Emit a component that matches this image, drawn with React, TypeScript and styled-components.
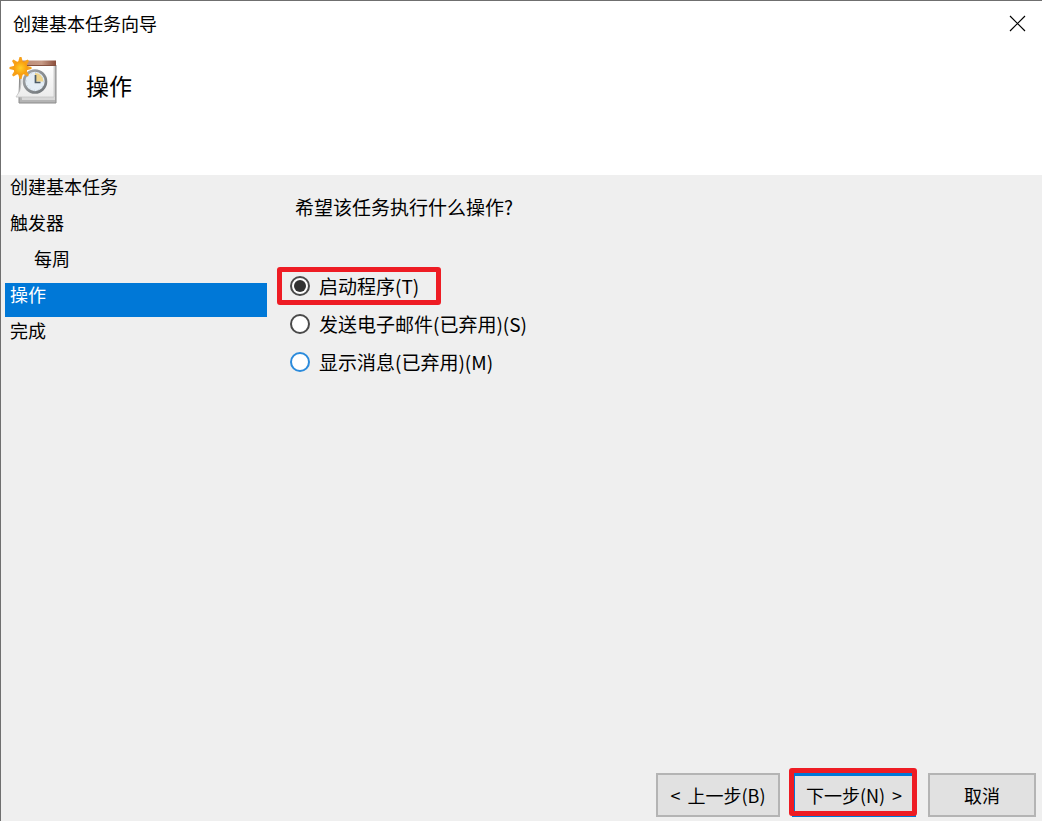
import React, { useState } from "react";
import styled, { createGlobalStyle, css } from "styled-components";

const GlobalStyle = createGlobalStyle`
  *, *::before, *::after { box-sizing: border-box; }
  body {
    margin: 0;
    background: #efefef;
    color: #000;
    font-family: "Noto Sans CJK SC", "Noto Sans", sans-serif;
    font-size: 18px;
  }
  button, input { font: inherit; color: inherit; }
`;

const callout = css`
  position: absolute;
  border: 5px solid #ee1c24;
  border-radius: 3px;
  pointer-events: none;
  content: "";
`;

const Dialog = styled.main`
  display: flex;
  flex-direction: column;
  min-height: 100vh;
  background: #efefef;
  border: solid #6f6f6f;
  border-width: 1px 0 0 1px;
`;

const Top = styled.header`
  height: 174px;
  background: #fff;
`;

const TitleBar = styled.div`
  display: flex;
  align-items: center;
  justify-content: space-between;
  height: 44px;
  padding: 0 16px 0 12px;
`;

const CloseButton = styled.button`
  display: flex;
  padding: 0;
  border: 0;
  background: none;
`;

const Banner = styled.div`
  display: flex;
  align-items: center;
  gap: 29px;
  padding: 12px 8px;
`;

const Heading = styled.h1`
  margin: 8px 0 0;
  font-size: 23px;
  line-height: 36px;
  font-weight: 400;
`;

const Body = styled.div`
  display: flex;
  flex: 1;
`;

const Steps = styled.ol`
  display: flex;
  flex-direction: column;
  gap: 2px;
  width: 262px;
  margin: 0 0 0 4px;
  padding: 0;
  list-style: none;
`;

const Step = styled.li<{ $current?: boolean; $nested?: boolean }>`
  height: 34px;
  padding-left: ${(p) => (p.$nested ? 29 : 5)}px;
  line-height: 23px;
  color: ${(p) => (p.$current ? "#fff" : "#000")};
  background: ${(p) => (p.$current ? "#0078d7" : "transparent")};
`;

const Options = styled.fieldset`
  flex: 1;
  min-width: 0;
  margin: 0;
  padding: 18px 0 0 23px;
  border: 0;
  font-size: 19px;
`;

const Question = styled.legend`
  float: left;
  width: 100%;
  margin-bottom: 51px;
  padding: 0 0 0 5px;
  line-height: 28px;
`;

const OptionList = styled.div`
  display: flex;
  flex-direction: column;
  align-items: flex-start;
  clear: both;
  gap: 10px;
`;

const Option = styled.label<{ $marked?: boolean }>`
  position: relative;
  display: flex;
  align-items: center;
  gap: 9px;
  line-height: 28px;
  height: 28px;

  &::after {
    ${(p) => p.$marked && callout}
    inset: -5px -22px -5px -13px;
  }
`;

const Radio = styled.input<{ $hot?: boolean }>`
  appearance: none;
  display: grid;
  place-items: center;
  width: 20px;
  height: 20px;
  margin: 0;
  border: 2px solid ${(p) => (p.$hot ? "#2b8bdc" : "#4a4a4a")};
  border-radius: 50%;
  background: #fff;

  &:checked::before {
    width: 12px;
    height: 12px;
    border-radius: 50%;
    background: #333;
    content: "";
  }
`;

const Actions = styled.footer`
  display: flex;
  justify-content: flex-end;
  gap: 12px;
  padding: 0 6px 4px;
`;

const Button = styled.button<{ $primary?: boolean; $narrow?: boolean }>`
  position: relative;
  display: flex;
  align-items: center;
  justify-content: center;
  gap: 7px;
  width: ${(p) => (p.$narrow ? 108 : 124)}px;
  height: 44px;
  padding: 0;
  border: ${(p) => (p.$primary ? "3px solid #0078d7" : "2px solid #b4b4b4")};
  background: #e1e1e1;
  line-height: 24px;
  white-space: nowrap;

  &::after {
    ${(p) => p.$primary && callout}
    inset: -8px -4px -2px -6px;
  }
`;

const rays = Array.from({ length: 8 }, (_, i) => i * 45);

function TaskIcon() {
  return (
    <svg width="48" height="48" viewBox="0 0 48 48" aria-hidden="true">
      <defs>
        <linearGradient id="paper" x1="0" y1="0" x2="0" y2="1">
          <stop offset="0" stopColor="#fff" />
          <stop offset="1" stopColor="#ececec" />
        </linearGradient>
        <linearGradient id="binding" x1="0" y1="0" x2="1" y2="0">
          <stop offset="0" stopColor="#b98974" />
          <stop offset=".6" stopColor="#c69a86" />
          <stop offset="1" stopColor="#8a4d3a" />
        </linearGradient>
        <linearGradient id="rim" x1="0" y1="0" x2="1" y2="1">
          <stop offset="0" stopColor="#a5a8ab" />
          <stop offset="1" stopColor="#6f7478" />
        </linearGradient>
        <radialGradient id="sun">
          <stop offset="0" stopColor="#ffd02a" />
          <stop offset="1" stopColor="#f99b0c" />
        </radialGradient>
      </defs>
      <path d="M11 8H47V46H10V40Z" fill="#b4b4b4" stroke="#8c8c8c" />
      <path d="M11 8H46V43H13Z" fill="#d8d8d8" />
      <path d="M12 8H45V40H7Q12 34 12 27Z" fill="url(#paper)" stroke="#c4c4c4" strokeWidth=".8" />
      <path d="M11 3.500H47V9H11Z" fill="url(#binding)" />
      <path d="M11 8.500H47" stroke="#85513f" />
      <circle cx="26" cy="24.500" r="11" fill="#e4edf5" stroke="url(#rim)" strokeWidth="2.600" />
      <path d="M26 24.500V16A8.500 8.500 0 0 1 34.500 24.500Z" fill="#efd58c" />
      <circle cx="26" cy="24.500" r="8.800" fill="none" stroke="#b5c2cc" strokeDasharray=".8 3.800" />
      <path d="M26.500 18V25.500H31.500" fill="none" stroke="#4b5b68" strokeWidth="1.700" />
      <g transform="translate(11.500 11)">
        {rays.map((a) => (
          <path key={a} d="M-2.600 -5L-1 -11H1L2.600 -5Z" fill="#f7a11a" transform={`rotate(${a})`} />
        ))}
        <circle r="7" fill="url(#sun)" />
      </g>
    </svg>
  );
}

const steps = [
  { label: "创建基本任务" },
  { label: "触发器" },
  { label: "每周", nested: true },
  { label: "操作", current: true },
  { label: "完成" },
];

const options = [
  { id: "program", label: "启动程序(T)", marked: true },
  { id: "email", label: "发送电子邮件(已弃用)(S)" },
  { id: "message", label: "显示消息(已弃用)(M)", hot: true },
];

export default function App() {
  const [selected, setSelected] = useState("program");

  return (
    <>
      <GlobalStyle />
      <Dialog>
        <Top>
          <TitleBar>
            <span>创建基本任务向导</span>
            <CloseButton type="button" aria-label="关闭">
              <svg width="17" height="17" viewBox="0 0 17 17" aria-hidden="true">
                <path d="M1 1L16 16M16 1L1 16" stroke="#000" strokeWidth="1.200" />
              </svg>
            </CloseButton>
          </TitleBar>
          <Banner>
            <TaskIcon />
            <Heading>操作</Heading>
          </Banner>
        </Top>
        <Body>
          <Steps>
            {steps.map((s) => (
              <Step
                key={s.label}
                $current={s.current}
                $nested={s.nested}
                aria-current={s.current ? "step" : undefined}
              >
                {s.label}
              </Step>
            ))}
          </Steps>
          <Options>
            <Question>希望该任务执行什么操作?</Question>
            <OptionList>
              {options.map((o) => (
                <Option key={o.id} htmlFor={o.id} $marked={o.marked}>
                  <Radio
                    type="radio"
                    id={o.id}
                    name="action"
                    checked={selected === o.id}
                    onChange={() => setSelected(o.id)}
                    $hot={o.hot}
                  />
                  {o.label}
                </Option>
              ))}
            </OptionList>
          </Options>
        </Body>
        <Actions>
          <Button type="button">
            <span>&lt;</span>
            <span>上一步(B)</span>
          </Button>
          <Button type="button" $primary>
            <span>下一步(N)</span>
            <span>&gt;</span>
          </Button>
          <Button type="button" $narrow>取消</Button>
        </Actions>
      </Dialog>
    </>
  );
}
